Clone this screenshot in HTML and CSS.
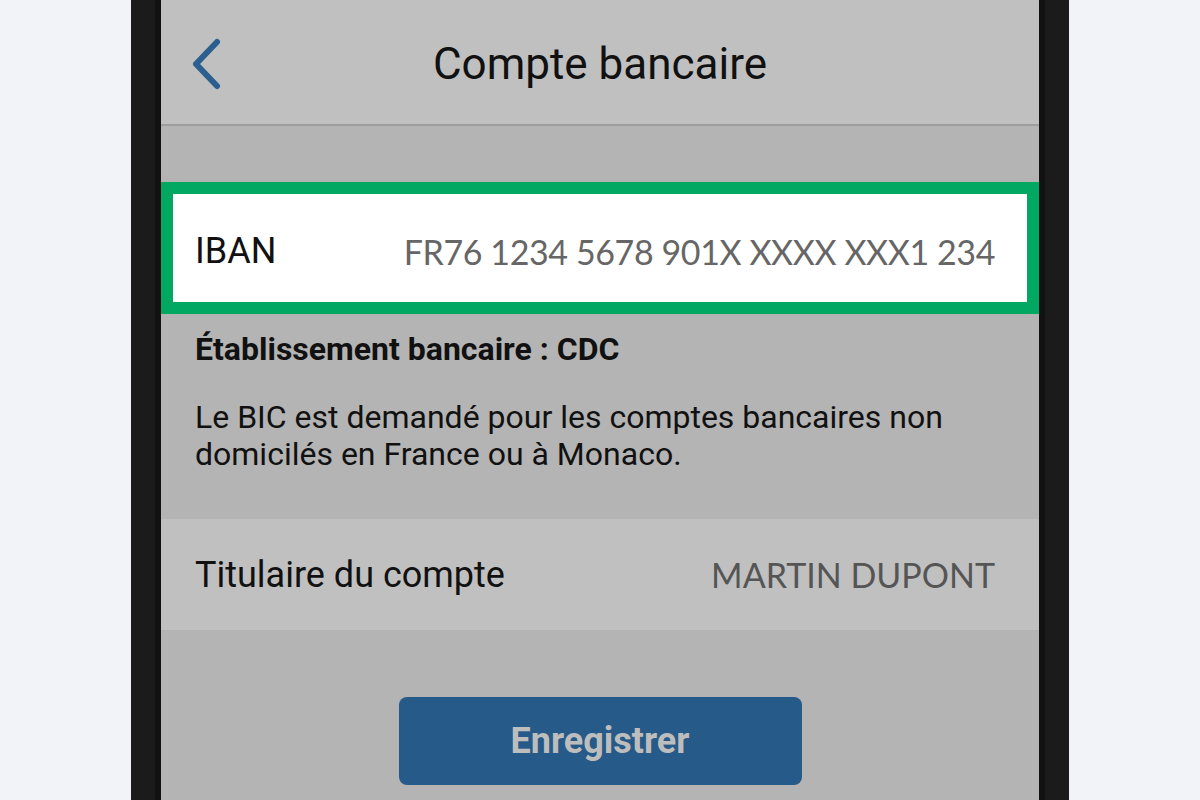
FILE: index.html
```html
<!DOCTYPE html>
<html lang="fr">
<head>
    <meta charset="UTF-8">
    <meta name="viewport" content="width=device-width, initial-scale=1.0">
    <title>Compte bancaire</title>
    <link rel="stylesheet" href="styles.css">
</head>
<body>
    <div class="phone">
        <div class="screen">
            <header class="topbar">
                <a href="#" class="back" aria-label="Retour">
                    <svg width="36" height="56" viewBox="0 0 36 56">
                        <polyline points="26,5 5,27 26,49" fill="none" stroke="#2b5f8f" stroke-width="6" stroke-linecap="round" stroke-linejoin="round"/>
                    </svg>
                </a>
                <h1>Compte bancaire</h1>
            </header>

            <main class="content">
                <!-- IBAN -->
                <div class="field field-highlight">
                    <span class="label">IBAN</span>
                    <span class="value">FR76 1234 5678 901X XXXX XXX1 234</span>
                </div>

                <div class="info">
                    <p class="bank">Établissement bancaire : CDC</p>
                    <p class="note">Le BIC est demandé pour les comptes bancaires non domicilés en France ou à Monaco.</p>
                </div>

                <!-- Titulaire -->
                <div class="field">
                    <span class="label">Titulaire du compte</span>
                    <span class="value">MARTIN DUPONT</span>
                </div>

                <div class="actions">
                    <button class="save">Enregistrer</button>
                </div>
            </main>
        </div>
    </div>
</body>
</html>
```

FILE: styles.css
```css
body {
    margin: 0;
    padding: 0;
    background-color: #f2f3f8;
    font-family: Roboto, 'Liberation Sans', sans-serif;
    color: #111;
}
.phone {
    width: 938px;
    height: 800px;
    margin: 0 auto;
    box-sizing: border-box;
    padding: 0 24px;
    background-color: #1b1b1b;
    overflow: hidden;
}
.screen {
    height: 100%;
    border-left: 6px solid #111;
    border-right: 6px solid #111;
    background-color: #b4b4b4;
}
.topbar {
    height: 124px;
    background-color: #c0c0c0;
    border-bottom: 2px solid #9d9d9d;
    display: flex;
    align-items: center;
    justify-content: center;
    position: relative;
}
.topbar h1 {
    margin: 4px 0 0;
    font-size: 44px;
    font-weight: 400;
    color: #111;
}
.back {
    position: absolute;
    left: 30px;
    top: 37px;
    display: block;
    line-height: 0;
}
.content {
    padding-top: 56px;
}
.field {
    display: flex;
    align-items: center;
    justify-content: space-between;
    height: 111px;
    padding: 0 44px 0 34px;
    background-color: #c0c0c0;
}
.field .label {
    font-size: 36px;
}
.field .value {
    font-family: Lato, 'Open Sans', sans-serif;
    font-size: 34px;
    color: #555;
}
.field-highlight {
    box-sizing: border-box;
    height: 132px;
    border: 12px solid #00a862;
    background-color: #fff;
    padding: 6px 32px 0 22px;
}
.field-highlight .value {
    color: #666;
    letter-spacing: -0.4px;
}
.info {
    padding: 16px 34px 46px;
}
.info p {
    margin: 0;
}
.info .bank {
    font-size: 32px;
    font-weight: 700;
    margin-bottom: 31px;
}
.info .note {
    font-size: 32px;
    line-height: 37px;
}
.actions {
    display: flex;
    justify-content: center;
    padding-top: 67px;
}
.save {
    width: 403px;
    height: 88px;
    border: none;
    border-radius: 8px;
    background-color: #265a88;
    color: #bdbdbd;
    font-family: Roboto, 'Liberation Sans', sans-serif;
    font-size: 36px;
    font-weight: 700;
}
```
